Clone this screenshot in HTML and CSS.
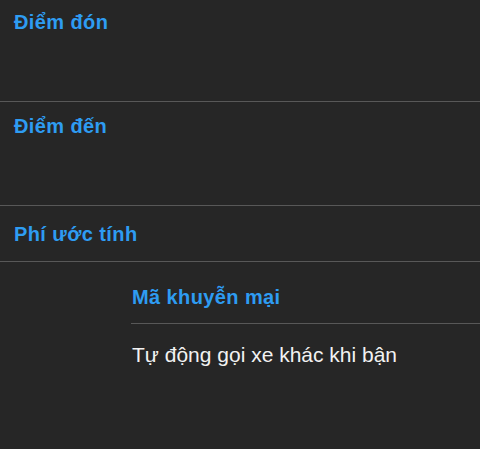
FILE: index.html
```html
<!DOCTYPE html>
<html lang="vi">
<head>
<meta charset="utf-8">
<link rel="stylesheet" href="styles.css">
</head>
<body>
<div class="screen">
  <section class="row row-pickup"><h2 class="label">Điểm đón</h2></section>
  <section class="row row-dest"><h2 class="label">Điểm đến</h2></section>
  <section class="row row-fee"><h2 class="label">Phí ước tính</h2></section>
  <div class="sub">
    <section class="row row-promo"><h2 class="label">Mã khuyễn mại</h2></section>
    <div class="row row-auto"><span class="option">Tự động gọi xe khác khi bận</span></div>
  </div>
</div>
</body>
</html>
```
FILE: styles.css
```css
html, body {
  margin: 0;
  padding: 0;
  background: #262626;
}
.screen {
  width: 480px;
  height: 449px;
  background: #262626;
  font-family: "Liberation Sans", Arial, sans-serif;
  overflow: hidden;
}
.row {
  box-sizing: border-box;
  border-bottom: 1px solid #585858;
  padding-left: 14px;
}
.label {
  margin: 0;
  font-size: 20px;
  line-height: 24px;
  font-weight: bold;
  letter-spacing: 0.4px;
  color: #2e9cf2;
}
.row-pickup { height: 102px; padding-top: 10px; }
.row-dest { height: 104px; padding-top: 12px; }
.row-fee { height: 56px; padding-top: 16px; }
.sub { margin-left: 131px; }
.row-promo { height: 62px; padding-top: 23px; padding-left: 1px; }
.row-auto { border-bottom: none; padding-top: 19px; padding-left: 1px; }
.option {
  font-size: 21px;
  line-height: 24px;
  color: #f2f2f2;
}
```
